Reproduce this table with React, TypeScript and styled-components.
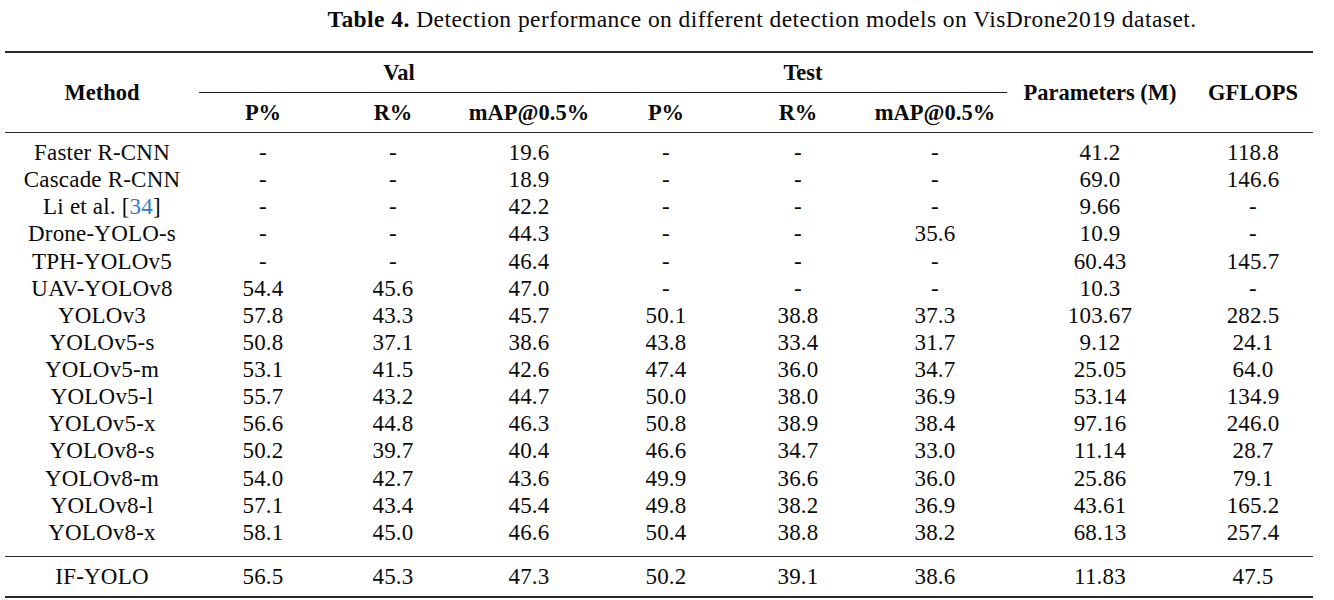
import React from 'react';
import styled, { createGlobalStyle } from 'styled-components';

const GlobalStyle = createGlobalStyle`
  html, body {
    margin: 0;
    padding: 0;
    background: #ffffff;
  }
  body {
    font-family: 'Liberation Serif', 'Times New Roman', serif;
    color: #0a0a0a;
  }
`;

const COLUMNS = '194px 128px 132px 140px 134px 130px 144px 186px 120px';

const Page = styled.div`
  width: 1334px;
  height: 600px;
  padding-left: 5px;
  box-sizing: border-box;
  overflow: hidden;
`;

const Caption = styled.div`
  height: 51px;
  padding-left: 185px;
  box-sizing: border-box;
  text-align: center;
  font-size: 23.5px;
  line-height: 38px;
  letter-spacing: 0.45px;
  white-space: nowrap;
`;

const CaptionLabel = styled.span`
  font-weight: bold;
`;

const Table = styled.div`
  width: 1308px;
`;

const Rule = styled.div<{ $weight: number }>`
  height: 0;
  border-top: ${({ $weight }) => $weight}px solid #2a2a2a;
`;

const Head = styled.div`
  display: grid;
  grid-template-columns: ${COLUMNS};
  grid-template-rows: 39px 1px 39px;
  font-weight: bold;
  font-size: 22.5px;
`;

const HeadCell = styled.div<{ $col: string; $row: string }>`
  grid-column: ${({ $col }) => $col};
  grid-row: ${({ $row }) => $row};
  display: flex;
  align-items: center;
  justify-content: center;
`;

const GroupLine = styled.div`
  grid-column: 2 / 8;
  grid-row: 2;
  background: #1a1a1a;
`;

const Body = styled.div<{ $padTop: number; $padBottom: number }>`
  padding-top: ${({ $padTop }) => $padTop}px;
  padding-bottom: ${({ $padBottom }) => $padBottom}px;
`;

const Row = styled.div<{ $height: number }>`
  display: grid;
  grid-template-columns: ${COLUMNS};
  height: ${({ $height }) => $height}px;
  font-size: 23px;
  letter-spacing: 0.2px;
`;

const Cell = styled.div`
  display: flex;
  align-items: center;
  justify-content: center;
  white-space: nowrap;
`;

const Ref = styled.span`
  color: #2f80c3;
`;

type Entry = {
  name: React.ReactNode;
  values: string[];
};

const rows: Entry[] = [
  { name: 'Faster R-CNN', values: ['-', '-', '19.6', '-', '-', '-', '41.2', '118.8'] },
  { name: 'Cascade R-CNN', values: ['-', '-', '18.9', '-', '-', '-', '69.0', '146.6'] },
  {
    name: (
      <>
        Li et al. [<Ref>34</Ref>]
      </>
    ),
    values: ['-', '-', '42.2', '-', '-', '-', '9.66', '-'],
  },
  { name: 'Drone-YOLO-s', values: ['-', '-', '44.3', '-', '-', '35.6', '10.9', '-'] },
  { name: 'TPH-YOLOv5', values: ['-', '-', '46.4', '-', '-', '-', '60.43', '145.7'] },
  { name: 'UAV-YOLOv8', values: ['54.4', '45.6', '47.0', '-', '-', '-', '10.3', '-'] },
  { name: 'YOLOv3', values: ['57.8', '43.3', '45.7', '50.1', '38.8', '37.3', '103.67', '282.5'] },
  { name: 'YOLOv5-s', values: ['50.8', '37.1', '38.6', '43.8', '33.4', '31.7', '9.12', '24.1'] },
  { name: 'YOLOv5-m', values: ['53.1', '41.5', '42.6', '47.4', '36.0', '34.7', '25.05', '64.0'] },
  { name: 'YOLOv5-l', values: ['55.7', '43.2', '44.7', '50.0', '38.0', '36.9', '53.14', '134.9'] },
  { name: 'YOLOv5-x', values: ['56.6', '44.8', '46.3', '50.8', '38.9', '38.4', '97.16', '246.0'] },
  { name: 'YOLOv8-s', values: ['50.2', '39.7', '40.4', '46.6', '34.7', '33.0', '11.14', '28.7'] },
  { name: 'YOLOv8-m', values: ['54.0', '42.7', '43.6', '49.9', '36.6', '36.0', '25.86', '79.1'] },
  { name: 'YOLOv8-l', values: ['57.1', '43.4', '45.4', '49.8', '38.2', '36.9', '43.61', '165.2'] },
  { name: 'YOLOv8-x', values: ['58.1', '45.0', '46.6', '50.4', '38.8', '38.2', '68.13', '257.4'] },
];

const ours: Entry = {
  name: 'IF-YOLO',
  values: ['56.5', '45.3', '47.3', '50.2', '39.1', '38.6', '11.83', '47.5'],
};

function DataRow({ entry, height }: { entry: Entry; height: number }) {
  return (
    <Row $height={height}>
      <Cell>{entry.name}</Cell>
      {entry.values.map((v, i) => (
        <Cell key={i}>{v}</Cell>
      ))}
    </Row>
  );
}

export default function App() {
  return (
    <Page>
      <GlobalStyle />
      <Caption>
        <CaptionLabel>Table 4.</CaptionLabel> Detection performance on different detection models on
        VisDrone2019 dataset.
      </Caption>
      <Table>
        <Rule $weight={2} />
        <Head>
          <HeadCell $col="1" $row="1 / 4">Method</HeadCell>
          <HeadCell $col="2 / 5" $row="1">Val</HeadCell>
          <HeadCell $col="5 / 8" $row="1">Test</HeadCell>
          <HeadCell $col="8" $row="1 / 4">Parameters (M)</HeadCell>
          <HeadCell $col="9" $row="1 / 4">GFLOPS</HeadCell>
          <GroupLine />
          <HeadCell $col="2" $row="3">P%</HeadCell>
          <HeadCell $col="3" $row="3">R%</HeadCell>
          <HeadCell $col="4" $row="3">mAP@0.5%</HeadCell>
          <HeadCell $col="5" $row="3">P%</HeadCell>
          <HeadCell $col="6" $row="3">R%</HeadCell>
          <HeadCell $col="7" $row="3">mAP@0.5%</HeadCell>
        </Head>
        <Rule $weight={1} />
        <Body $padTop={6.5} $padBottom={10}>
          {rows.map((r, i) => (
            <DataRow key={i} entry={r} height={27.14} />
          ))}
        </Body>
        <Rule $weight={1} />
        <DataRow entry={ours} height={38.5} />
        <Rule $weight={2} />
      </Table>
    </Page>
  );
}
